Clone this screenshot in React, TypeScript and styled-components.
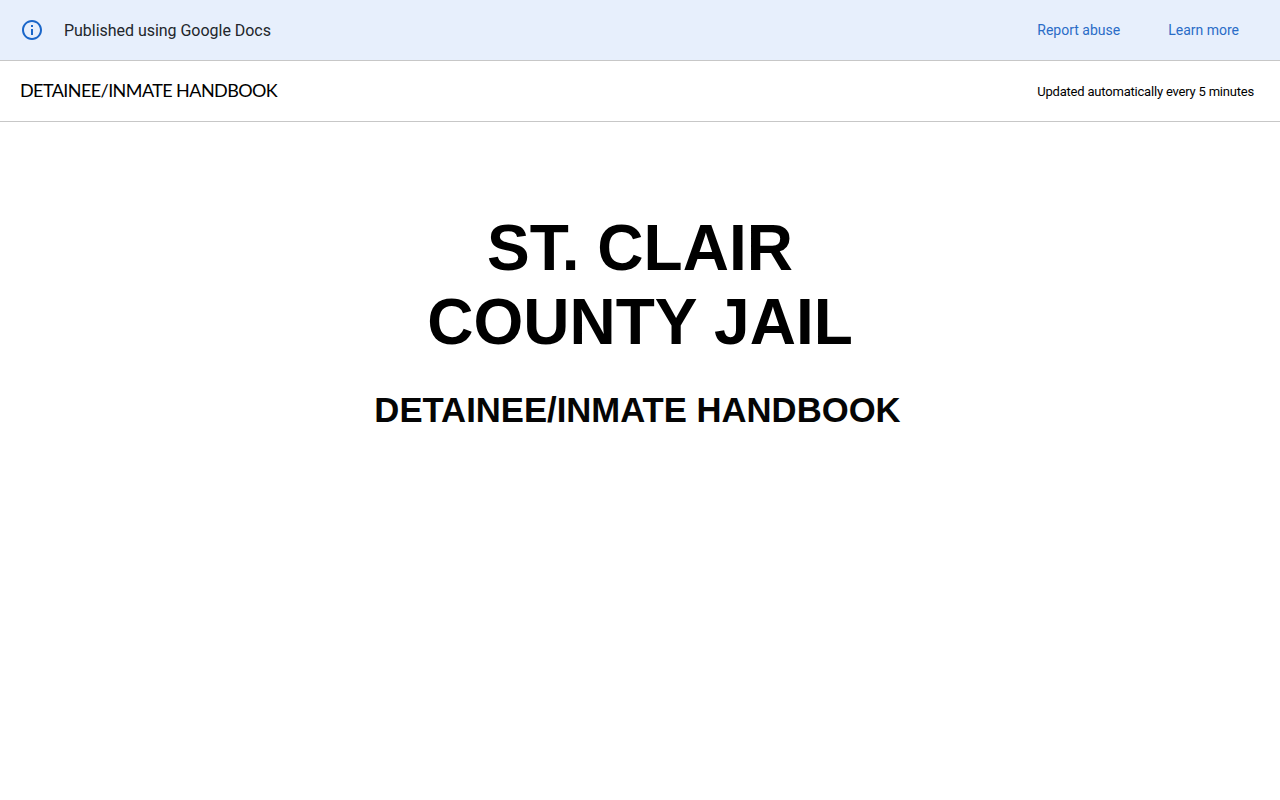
import React from 'react';
import styled, { createGlobalStyle } from 'styled-components';

const GlobalStyle = createGlobalStyle`
  html, body {
    margin: 0;
    padding: 0;
    background: #fff;
    font-family: Roboto, "Liberation Sans", sans-serif;
  }
`;

const Banner = styled.div`
  height: 60px;
  display: flex;
  align-items: center;
  background: #e7effc;
  border-bottom: 1px solid #c7c7c7;
  padding: 0 41px 0 20px;
`;

const InfoIcon = styled.svg`
  width: 24px;
  height: 24px;
  fill: #1a66c9;
  margin-right: 20px;
`;

const BannerText = styled.div`
  flex: 1;
  font-size: 16px;
  letter-spacing: -0.03px;
  color: #22262b;
`;

const BannerLink = styled.a`
  font-size: 14px;
  color: #2a6cc7;
  text-decoration: none;
  margin-left: 48px;
`;

const Header = styled.div`
  height: 60px;
  display: flex;
  align-items: center;
  justify-content: space-between;
  border-bottom: 1px solid #c7c7c7;
  padding: 0 26px 0 20px;
`;

const DocTitle = styled.div`
  font-family: Lato, sans-serif;
  font-size: 18px;
  letter-spacing: -0.58px;
  color: #000;
  margin-top: -3px;
`;

const UpdatedNote = styled.div`
  font-size: 13px;
  letter-spacing: -0.2px;
  color: #000;
  margin-top: 1px;
`;

const Content = styled.div`
  display: flex;
  flex-direction: column;
  align-items: center;
  padding-top: 89px;
  font-family: "Liberation Sans", Arial, sans-serif;
  font-weight: 700;
  color: #000;
`;

const Heading = styled.h1`
  margin: 0;
  font-size: 64px;
  line-height: 74px;
  text-align: center;
`;

const SubHeading = styled.h2`
  margin: 31px 5px 0 0;
  font-size: 34.667px;
  line-height: 40px;
  color: #050505;
`;

export default function App() {
  return (
    <>
      <GlobalStyle />
      <Banner>
        <InfoIcon viewBox="0 0 24 24">
          <path d="M11 7h2v2h-2zm0 4h2v6h-2zm1-9C6.48 2 2 6.48 2 12s4.48 10 10 10 10-4.48 10-10S17.52 2 12 2zm0 18c-4.41 0-8-3.59-8-8s3.59-8 8-8 8 3.59 8 8-3.59 8-8 8z" />
        </InfoIcon>
        <BannerText>Published using Google Docs</BannerText>
        <BannerLink href="#">Report abuse</BannerLink>
        <BannerLink href="#">Learn more</BannerLink>
      </Banner>
      <Header>
        <DocTitle>DETAINEE/INMATE HANDBOOK</DocTitle>
        <UpdatedNote>Updated automatically every 5 minutes</UpdatedNote>
      </Header>
      <Content>
        <Heading>
          ST. CLAIR
          <br />
          COUNTY JAIL
        </Heading>
        <SubHeading>DETAINEE/INMATE HANDBOOK</SubHeading>
      </Content>
    </>
  );
}
